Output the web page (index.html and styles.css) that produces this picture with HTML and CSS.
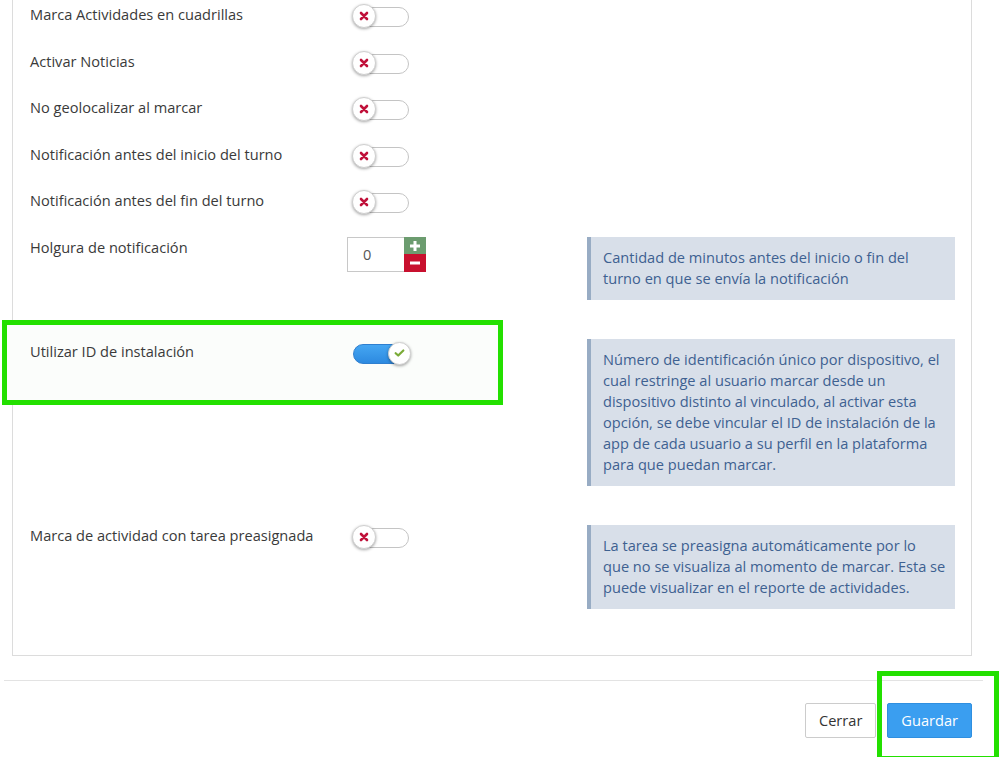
FILE: index.html
```html
<!DOCTYPE html>
<html lang="es">
<head>
  <meta charset="UTF-8">
  <meta name="viewport" content="width=device-width, initial-scale=1">
  <title>Configuración</title>
  <link rel="stylesheet" href="styles.css">
</head>
<body>
  <!-- Panel de opciones -->
  <div class="panel">
    <div class="row">
      <label class="row-label">Marca Actividades en cuadrillas</label>
      <div class="control">
        <span class="switch"><span class="knob"><svg viewBox="0 0 10 10" width="10" height="10"><path d="M2 2 L8 8 M8 2 L2 8" stroke="#c0113a" stroke-width="2.6" stroke-linecap="round"/></svg></span></span>
      </div>
    </div>
    <div class="row">
      <label class="row-label">Activar Noticias</label>
      <div class="control">
        <span class="switch"><span class="knob"><svg viewBox="0 0 10 10" width="10" height="10"><path d="M2 2 L8 8 M8 2 L2 8" stroke="#c0113a" stroke-width="2.6" stroke-linecap="round"/></svg></span></span>
      </div>
    </div>
    <div class="row">
      <label class="row-label">No geolocalizar al marcar</label>
      <div class="control">
        <span class="switch"><span class="knob"><svg viewBox="0 0 10 10" width="10" height="10"><path d="M2 2 L8 8 M8 2 L2 8" stroke="#c0113a" stroke-width="2.6" stroke-linecap="round"/></svg></span></span>
      </div>
    </div>
    <div class="row">
      <label class="row-label">Notificación antes del inicio del turno</label>
      <div class="control">
        <span class="switch"><span class="knob"><svg viewBox="0 0 10 10" width="10" height="10"><path d="M2 2 L8 8 M8 2 L2 8" stroke="#c0113a" stroke-width="2.6" stroke-linecap="round"/></svg></span></span>
      </div>
    </div>
    <div class="row">
      <label class="row-label">Notificación antes del fin del turno</label>
      <div class="control">
        <span class="switch"><span class="knob"><svg viewBox="0 0 10 10" width="10" height="10"><path d="M2 2 L8 8 M8 2 L2 8" stroke="#c0113a" stroke-width="2.6" stroke-linecap="round"/></svg></span></span>
      </div>
    </div>

    <div class="row with-help">
      <label class="row-label">Holgura de notificación</label>
      <div class="control">
        <div class="spinner">
          <input class="spinner-input" type="text" value="0">
          <div class="spinner-buttons">
            <button class="spin plus"><svg viewBox="0 0 12 12" width="12" height="12"><path d="M6 1 V11 M1 6 H11" stroke="#fff" stroke-width="3"/></svg></button>
            <button class="spin minus"><svg viewBox="0 0 12 12" width="12" height="12"><path d="M1 6 H11" stroke="#fff" stroke-width="3"/></svg></button>
          </div>
        </div>
      </div>
      <div class="help">Cantidad de minutos antes del inicio o fin del turno en que se envía la notificación</div>
    </div>

    <div class="row with-help shifted">
      <div class="highlight"></div>
      <label class="row-label">Utilizar ID de instalación</label>
      <div class="control">
        <span class="switch on"><span class="knob"><svg viewBox="0 0 12 10" width="11" height="10"><path d="M1.8 5.2 L4.6 7.8 L10.2 2.2" fill="none" stroke="#7aab37" stroke-width="2.4" stroke-linecap="round" stroke-linejoin="round"/></svg></span></span>
      </div>
      <div class="help">Número de identificación único por dispositivo, el cual restringe al usuario marcar desde un dispositivo distinto al vinculado, al activar esta opción, se debe vincular el ID de instalación de la app de cada usuario a su perfil en la plataforma para que puedan marcar.</div>
    </div>

    <div class="row with-help last">
      <label class="row-label">Marca de actividad con tarea preasignada</label>
      <div class="control">
        <span class="switch"><span class="knob"><svg viewBox="0 0 10 10" width="10" height="10"><path d="M2 2 L8 8 M8 2 L2 8" stroke="#c0113a" stroke-width="2.6" stroke-linecap="round"/></svg></span></span>
      </div>
      <div class="help">La tarea se preasigna automáticamente por lo<br>que no se visualiza al momento de marcar. Esta se puede visualizar en el reporte de actividades.</div>
    </div>
  </div>

  <!-- Pie del modal -->
  <div class="footer">
    <button class="btn btn-default">Cerrar</button>
    <button class="btn btn-primary">Guardar</button>
  </div>
  <div class="highlight footer-highlight"></div>
</body>
</html>
```

FILE: styles.css
```css
/* Ustawienia globalne */
* {
  box-sizing: border-box;
  margin: 0;
  padding: 0;
}

body {
  position: relative;
  width: 999px;
  height: 757px;
  overflow: hidden;
  background-color: white;
  font-family: "Open Sans", Arial, sans-serif;
  font-size: 14px;
  color: #333;
}

.panel {
  margin: 0 27px 0 12px;
  border: 1px solid #dcdcdc;
  border-top: 0;
  padding: 4px 16px 46px 17px;
}

.row {
  position: relative;
  display: grid;
  grid-template-columns: 317px 240px 368px;
  align-items: start;
  height: 46.6px;
}

.row.with-help {
  height: auto;
  margin-bottom: 39px;
}

.row.shifted .row-label,
.row.shifted .control {
  padding-top: 2px;
}

.row.last {
  margin-bottom: 0;
}

.row-label {
  position: relative;
  z-index: 1;
  font-size: 14.6px;
  line-height: 20px;
  color: #3a3a3a;
}

.control {
  position: relative;
  z-index: 1;
}

/* Przełącznik */
.switch {
  position: relative;
  display: block;
  width: 55px;
  height: 20px;
  margin: 3px 0 0 7px;
  border: 1px solid #c4c4c4;
  border-radius: 11px;
  background-color: #fff;
}

.switch .knob {
  position: absolute;
  top: -4px;
  left: -3px;
  width: 24px;
  height: 24px;
  border-radius: 50%;
  border: 1px solid #d0d0d0;
  background-color: #fff;
  box-shadow: 0 1px 3px rgba(0, 0, 0, 0.35);
  display: flex;
  justify-content: center;
  align-items: center;
}

.switch.on {
  border-color: #2f7fcf;
  background: linear-gradient(#45a6f2, #2d8ae0);
  margin-left: 6px;
}

.switch.on .knob {
  left: auto;
  right: -4px;
  top: -3px;
  width: 23px;
  height: 23px;
}

/* Pole liczbowe */
.spinner {
  display: flex;
  width: 79px;
  height: 35px;
}

.spinner-input {
  width: 57px;
  height: 35px;
  border: 1px solid #c8c8c8;
  border-right: 0;
  padding-left: 15px;
  font-family: "Open Sans", Arial, sans-serif;
  font-size: 14.6px;
  color: #555;
  background-color: #fff;
}

.spinner-buttons {
  display: flex;
  flex-direction: column;
  width: 22px;
}

.spin {
  flex: 1;
  border: none;
  display: flex;
  justify-content: center;
  align-items: center;
}

.spin.plus {
  background-color: #6c9c6f;
}

.spin.minus {
  background-color: #c8102e;
}

/* Podpowiedzi */
.help {
  position: relative;
  z-index: 1;
  background-color: #d8dfe9;
  border-left: 4px solid #98acc4;
  padding: 10.5px 8px 10.5px 12px;
  line-height: 21px;
  font-size: 14.6px;
  color: #3e6191;
}

/* Zaznaczenia */
.highlight {
  position: absolute;
  top: -19px;
  left: -28px;
  width: 501px;
  height: 85px;
  border: 5px solid #23e000;
  background-color: #fbfdfb;
  z-index: 0;
}

.footer-highlight {
  top: 671px;
  left: 877px;
  width: 122px;
  height: 90px;
  background-color: transparent;
}

/* Stopka */
.footer {
  display: flex;
  justify-content: flex-end;
  gap: 11px;
  margin: 24px 16px 0 4px;
  border-top: 1px solid #e3e3e3;
  padding: 22px 11px 0 0;
}

.btn {
  height: 35px;
  padding: 0 13px;
  border: 1px solid #ccc;
  border-radius: 2px;
  font-family: "Open Sans", Arial, sans-serif;
  font-size: 14.6px;
  cursor: pointer;
}

.btn-default {
  background-color: #fff;
  color: #333;
}

.btn-primary {
  background-color: #3a9ef0;
  border-color: #2f8fe0;
  color: #fff;
}
```
